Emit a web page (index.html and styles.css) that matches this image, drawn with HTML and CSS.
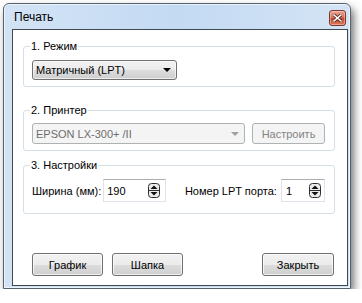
FILE: index.html
```html
<!DOCTYPE html>
<html lang="ru">
<head>
    <meta charset="UTF-8">
    <title>Печать</title>
    <link rel="stylesheet" href="styles.css">
</head>
<body>

    <div class="window">
        <div class="titlebar">
            <span class="title">Печать</span>
            <button class="close-box" title="Закрыть">
                <svg width="9" height="8" viewBox="0 0 9 8">
                    <path d="M1 1 L8 7 M8 1 L1 7" stroke="#3a1a14" stroke-width="3" stroke-linecap="square"/>
                    <path d="M1 1 L8 7 M8 1 L1 7" stroke="#ffffff" stroke-width="1.6" stroke-linecap="square"/>
                </svg>
            </button>
        </div>

        <div class="client">
            <fieldset class="group group-mode">
                <legend>1. Режим</legend>
                <div class="combo combo-mode">
                    <span>Матричный (LPT)</span>
                    <i class="arrow"></i>
                </div>
            </fieldset>

            <fieldset class="group group-printer">
                <legend>2. Принтер</legend>
                <div class="row">
                    <div class="combo combo-printer disabled">
                        <span>EPSON LX-300+ /II</span>
                        <i class="arrow"></i>
                    </div>
                    <button class="btn btn-setup" disabled>Настроить</button>
                </div>
            </fieldset>

            <fieldset class="group group-settings">
                <legend>3. Настройки</legend>
                <div class="row">
                    <label class="field-label">Ширина (мм):</label>
                    <div class="spin spin-width">
                        <span>190</span>
                        <svg class="spin-arrows" width="12" height="15" viewBox="0 0 12 15">
                            <rect x="0.5" y="0.5" width="11" height="14" rx="3" fill="#ececec" stroke="#2e2e2e"/>
                            <path d="M0.5 7.5 H11.5" stroke="#2e2e2e"/>
                            <path d="M2.5 6 L6 2.5 L9.5 6 Z" fill="#111"/>
                            <path d="M2.5 9 L6 12.5 L9.5 9 Z" fill="#111"/>
                        </svg>
                    </div>
                    <label class="field-label lpt-label">Номер LPT порта:</label>
                    <div class="spin spin-port">
                        <span>1</span>
                        <svg class="spin-arrows" width="12" height="15" viewBox="0 0 12 15">
                            <rect x="0.5" y="0.5" width="11" height="14" rx="3" fill="#ececec" stroke="#2e2e2e"/>
                            <path d="M0.5 7.5 H11.5" stroke="#2e2e2e"/>
                            <path d="M2.5 6 L6 2.5 L9.5 6 Z" fill="#111"/>
                            <path d="M2.5 9 L6 12.5 L9.5 9 Z" fill="#111"/>
                        </svg>
                    </div>
                </div>
            </fieldset>

            <div class="footer">
                <button class="btn btn-chart">График</button>
                <button class="btn btn-header">Шапка</button>
                <button class="btn btn-close">Закрыть</button>
            </div>
        </div>
    </div>

</body>
</html>
```

FILE: styles.css
```css
body {
    margin: 0;
    padding: 3px 0 0 3px;
    background-color: #ffffff;
    font-family: 'Liberation Sans', Arial, sans-serif;
    font-size: 11px;
    color: #000000;
}
.window {
    box-sizing: border-box;
    width: 348px;
    height: 286px;
    display: flex;
    flex-direction: column;
    border: 1px solid #56636f;
    border-radius: 6px 6px 0 0;
    background: linear-gradient(to right, #d3e3f5, #c3daf3 50%, #d4e4f5);
    box-shadow: inset 0 0 0 1px rgba(255, 255, 255, 0.6), 3px 5px 9px rgba(0, 0, 0, 0.55);
}
.titlebar {
    height: 25px;
    display: flex;
    align-items: flex-start;
    justify-content: space-between;
    padding: 0 4px 0 10px;
}
.title {
    font-size: 12px;
    line-height: 25px;
    padding-top: 1px;
    color: #000000;
}
.close-box {
    width: 17px;
    height: 16px;
    margin-top: 6px;
    padding: 0;
    display: flex;
    align-items: center;
    justify-content: center;
    border: 1px solid #7b3a2d;
    border-radius: 3px;
    background: linear-gradient(#eba593, #da7058 45%, #c9472b 55%, #dc7a5c);
    box-shadow: inset 0 0 0 1px rgba(255, 255, 255, 0.35);
}
.client {
    box-sizing: border-box;
    height: 257px;
    margin: 0 2px 0 8px;
    display: flex;
    flex-direction: column;
    padding: 10px 12px 9px 10px;
    border: 1px solid #3f4954;
    background-color: #ffffff;
}
.group {
    margin: 0;
    min-width: 0;
    border: 1px solid #d5dfe5;
    border-radius: 3px;
    padding: 7px 9px 6px 8px;
}
.group legend {
    padding: 0 1px;
    margin-left: -2px;
    line-height: 13px;
}
.group-printer {
    margin-top: 17px;
    padding-top: 6px;
}
.group-settings {
    margin-top: 8px;
    padding-bottom: 11px;
}
.row {
    display: flex;
    align-items: center;
}
.combo {
    box-sizing: border-box;
    display: flex;
    align-items: center;
    justify-content: space-between;
    padding: 0 5px 0 3px;
    border: 1px solid #707070;
    border-radius: 3px;
    background: linear-gradient(#f2f2f2, #ebebeb 50%, #dddddd 50%, #cfcfcf);
    box-shadow: inset 0 0 0 1px rgba(255, 255, 255, 0.6);
}
.combo-mode {
    width: 145px;
    height: 20px;
}
.combo-printer {
    width: 213px;
    height: 21px;
}
.arrow {
    width: 0;
    height: 0;
    border-left: 4px solid transparent;
    border-right: 4px solid transparent;
    border-top: 4px solid #000000;
}
.combo.disabled {
    border-color: #adb2b5;
    background: #f4f4f4;
    box-shadow: none;
    color: #6d6d6d;
}
.combo.disabled .arrow {
    border-top-color: #a0a0a0;
}
.btn {
    box-sizing: border-box;
    height: 23px;
    width: 71px;
    padding: 0;
    font-family: 'Liberation Sans', Arial, sans-serif;
    font-size: 11px;
    color: #000000;
    border: 1px solid #707070;
    border-radius: 3px;
    background: linear-gradient(#f2f2f2, #ebebeb 50%, #dddddd 50%, #cfcfcf);
    box-shadow: inset 0 0 0 1px rgba(255, 255, 255, 0.7);
}
.btn-setup {
    width: 73px;
    height: 21px;
    margin-left: 7px;
}
.btn:disabled {
    border-color: #adb2b5;
    background: #f4f4f4;
    box-shadow: none;
    color: #838383;
}
.field-label {
    white-space: nowrap;
}
.spin {
    box-sizing: border-box;
    height: 23px;
    display: flex;
    align-items: center;
    justify-content: space-between;
    padding: 0 5px 0 3px;
    border: 1px solid #e2e3ea;
    border-top-color: #abadb3;
    background-color: #ffffff;
}
.spin-width {
    width: 67px;
    margin-left: 2px;
}
.lpt-label {
    margin-left: 19px;
}
.spin-port {
    width: 47px;
    margin-left: 4px;
    padding: 0 3px 0 4px;
}
.footer {
    margin-top: auto;
    display: flex;
    padding: 0 1px 0 9px;
}
.btn-header {
    margin-left: 9px;
}
.btn-close {
    width: 72px;
    margin-left: auto;
}
```
